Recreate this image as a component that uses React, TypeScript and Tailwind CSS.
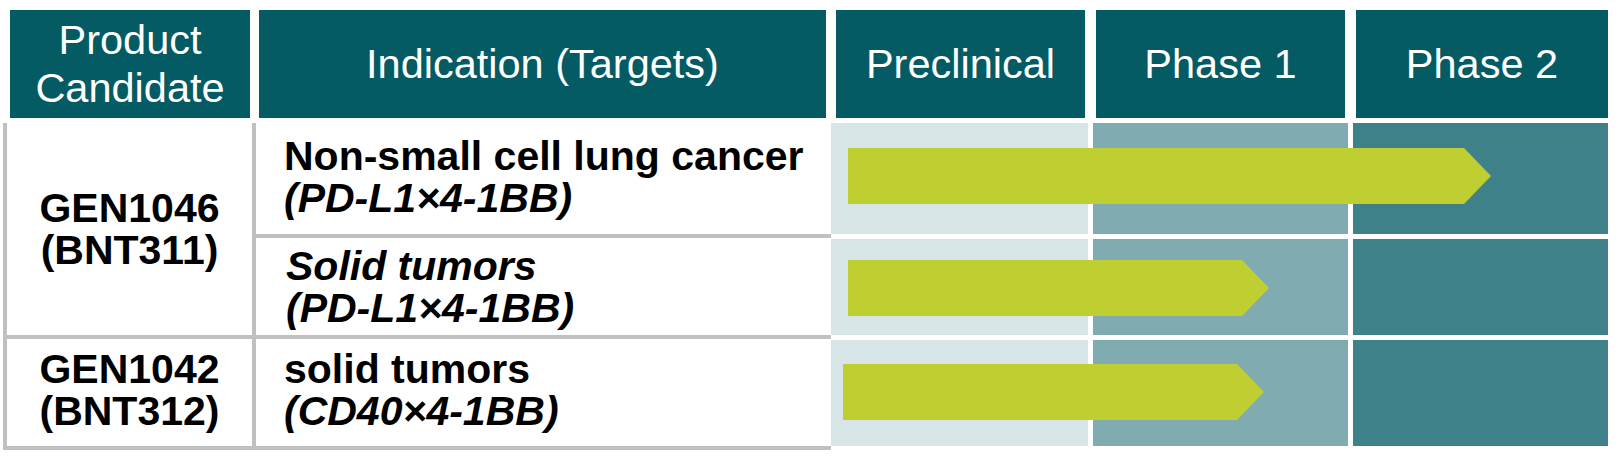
const TEAL = "bg-[#045b64]";

function Arrow({ width }: { width: number }) {
  const tip = 27;
  return (
    <svg width={width} height={56} className="block">
      <polygon points={`0,0 ${width - tip},0 ${width},28 ${width - tip},56 0,56`} fill="#bfcf32" />
    </svg>
  );
}

export default function App() {
  return (
    <div className="w-[1618px] h-[467px] bg-white font-['Liberation_Sans',Arial,sans-serif] text-black">
      {/* Header */}
      <div className="flex pt-[10px] pl-[10px] text-white text-[41.5px] leading-[48px]">
        <div className={`${TEAL} w-[240px] h-[108px] flex items-center justify-center text-center`}>
          Product<br />Candidate
        </div>
        <div className={`${TEAL} ml-[9px] w-[567px] h-[108px] flex items-center justify-center`}>
          Indication (Targets)
        </div>
        <div className={`${TEAL} ml-[10px] w-[249px] h-[108px] flex items-center justify-center`}>
          Preclinical
        </div>
        <div className={`${TEAL} ml-[11px] w-[249px] h-[108px] flex items-center justify-center`}>
          Phase 1
        </div>
        <div className={`${TEAL} ml-[11px] w-[252px] h-[108px] flex items-center justify-center`}>
          Phase 2
        </div>
      </div>

      {/* Body */}
      <div className="flex mt-[5px] pl-[3px]">
        {/* Candidate / indication table */}
        <div className="grid grid-cols-[245px_575px] grid-rows-[111px_97px_107px] gap-[4px] pl-[4px] pb-[4px] bg-[#c0c0c0] text-[41px] leading-[42px] font-bold">
          <div className="row-span-2 bg-white flex flex-col items-center justify-center text-center">
            <span>GEN1046</span>
            <span>(BNT311)</span>
          </div>
          <div className="bg-white flex flex-col justify-center pl-[28px] pb-[3px]">
            <span>Non-small cell lung cancer</span>
            <span className="italic">(PD-L1×4-1BB)</span>
          </div>
          <div className="bg-white flex flex-col justify-center pl-[30px]">
            <span className="italic">Solid tumors</span>
            <span className="italic">(PD-L1×4-1BB)</span>
          </div>
          <div className="bg-white flex flex-col items-center justify-center text-center pb-[6px]">
            <span>GEN1042</span>
            <span>(BNT312)</span>
          </div>
          <div className="bg-white flex flex-col justify-center pl-[28px] pb-[6px]">
            <span>solid tumors</span>
            <span className="italic">(CD40×4-1BB)</span>
          </div>
        </div>

        {/* Phase grid */}
        <div className="grid grid-cols-[257px_255px_255px] grid-rows-[111px_96px_106px] gap-[5px]">
          <div className="row-start-1 col-start-1 bg-[#d7e5e7]" />
          <div className="row-start-1 col-start-2 bg-[#80abb0]" />
          <div className="row-start-1 col-start-3 bg-[#3f8189]" />
          <div className="row-start-2 col-start-1 bg-[#d7e5e7]" />
          <div className="row-start-2 col-start-2 bg-[#80abb0]" />
          <div className="row-start-2 col-start-3 bg-[#3f8189]" />
          <div className="row-start-3 col-start-1 bg-[#d7e5e7]" />
          <div className="row-start-3 col-start-2 bg-[#80abb0]" />
          <div className="row-start-3 col-start-3 bg-[#3f8189]" />

          <div className="row-start-1 col-start-1 col-span-3 self-start mt-[25px] ml-[17px]">
            <Arrow width={643} />
          </div>
          <div className="row-start-2 col-start-1 col-span-3 self-start mt-[21px] ml-[17px]">
            <Arrow width={421} />
          </div>
          <div className="row-start-3 col-start-1 col-span-3 self-start mt-[24px] ml-[12px]">
            <Arrow width={421} />
          </div>
        </div>
      </div>
    </div>
  );
}
